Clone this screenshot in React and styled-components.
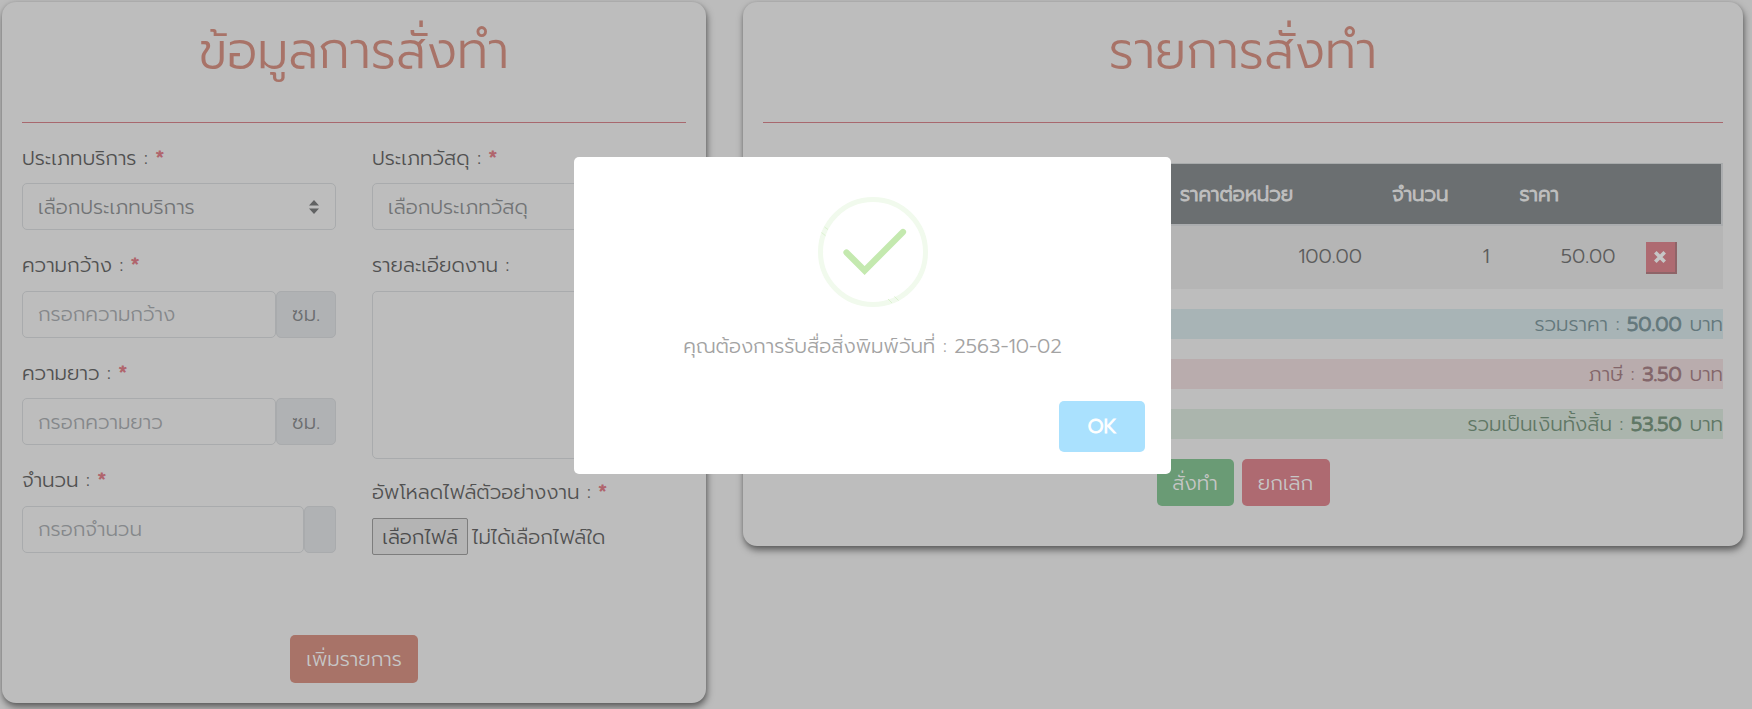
import React from "react";
import styled, { createGlobalStyle, css } from "styled-components";

const Global = createGlobalStyle`
  *, *::before, *::after { box-sizing: border-box; }
  body {
    margin: 0;
    background: #bcbcbc;
    color: #5c5c5c;
    font-family: "Prompt", "Kanit", "Open Sans", "Noto Sans Thai", sans-serif;
    font-size: 20px;
    font-weight: 300;
    line-height: 30px;
  }
  button, input, textarea { font: inherit; }
`;

const heavy = css`
  font-weight: 300;
  -webkit-text-stroke: 0.9px currentColor;
`;

const Page = styled.main`
  display: flex;
  align-items: flex-start;
  gap: 37px;
  height: 709px;
  padding: 2px 9px 0 2px;
  overflow: hidden;
`;

const Card = styled.section`
  display: flex;
  flex-direction: column;
  width: ${(p) => p.$width}px;
  height: ${(p) => p.$height}px;
  padding: 0 20px;
  border-radius: 14px;
  background: #bdbdbd;
  box-shadow: 1px 4px 7px rgba(0, 0, 0, 0.5), 0 0 3px rgba(0, 0, 0, 0.1);
`;

const Title = styled.h1`
  margin: 0;
  height: 121px;
  padding-top: 19px;
  border-bottom: 1px solid #a8686e;
  color: #a87368;
  font-size: 50px;
  font-weight: 300;
  line-height: 60px;
  text-align: center;
  white-space: nowrap;
`;

const Text = styled.span`
  white-space: nowrap;
`;

const Columns = styled.div`
  display: grid;
  grid-template-columns: 314px 314px;
  gap: 36px;
  height: 512px;
  padding-top: 19.5px;
`;

const Column = styled.div`
  display: flex;
  flex-direction: column;
`;

const Field = styled.div`
  display: flex;
  flex-direction: column;
  height: ${(p) => p.$height || 107.5}px;
`;

const Label = styled.label`
  height: 40.5px;
  color: #515151;
  white-space: nowrap;
`;

const Star = styled.span`
  color: #b0646c;
  ${heavy}
`;

const Control = styled.div`
  display: flex;
  align-items: center;
  flex: ${(p) => (p.$grow ? "1" : "none")};
  justify-content: space-between;
  height: 47px;
  padding: 0 16px 0 15px;
  border: 1px solid #a9abad;
  border-radius: 5px;
  color: ${(p) => (p.$placeholder ? "#85888b" : "#727476")};
`;

const Group = styled.div`
  display: flex;
  height: 47px;
`;

const Addon = styled.div`
  display: flex;
  align-items: center;
  padding: 0 15px;
  border: 1px solid #a9abad;
  border-radius: 5px;
  background: #b0b2b4;
  color: #6c6e70;
`;

const TextArea = styled.div`
  height: 168px;
  border: 1px solid #a9abad;
  border-radius: 5px;
`;

const FileRow = styled.div`
  display: flex;
  align-items: center;
  gap: 4px;
  margin-top: 1px;
  color: #515151;
`;

const FileButton = styled.button`
  width: 96px;
  height: 37px;
  padding: 0;
  border: 1px solid #7d7d7d;
  border-radius: 2px;
  background: #b4b4b4;
  color: #4c4c4c;
  white-space: nowrap;
`;

const Actions = styled.div`
  display: flex;
  justify-content: center;
  gap: 8px;
`;

const Button = styled.button`
  width: ${(p) => p.$width}px;
  height: ${(p) => p.$height || 47}px;
  padding: 0;
  border: 0;
  border-radius: 5px;
  background: ${(p) => p.$color};
  color: #c6c6c6;
  white-space: nowrap;
`;

const Table = styled.div`
  margin: 40px 0 20px;
  border-top: 1px solid #a8abac;
`;

const Row = styled.div`
  display: grid;
  grid-template-columns: 402px 212px 127.5px 126px 1fr;
  align-items: center;
  height: 63px;
  padding-bottom: 4px;
  background: #b5b5b5;
`;

const HeadRow = styled(Row)`
  height: 62px;
  padding-bottom: 0;
  border: solid #abadaf;
  border-width: 0 2px 2px 0;
  background: #6b6f71;
  color: #bfbfbf;
  ${heavy}
`;

const Cell = styled.div`
  padding: 0 15px;
  text-align: ${(p) => (p.$right ? "right" : "left")};
  white-space: nowrap;
`;

const Remove = styled.button`
  display: flex;
  align-items: center;
  justify-content: center;
  width: 31px;
  height: 32px;
  margin-top: 5px;
  padding: 0;
  border: solid #8e6468;
  border-width: 0 2px 2px 0;
  background: #ae6a71;
`;

const Total = styled.div`
  height: 30px;
  margin-bottom: 20px;
  background: ${(p) => p.$bg};
  color: ${(p) => p.$fg};
  text-align: right;
  white-space: nowrap;
  b { ${heavy} }
`;

const Overlay = styled.div`
  position: fixed;
  inset: 0;
`;

const Modal = styled.div`
  display: flex;
  flex-direction: column;
  align-items: center;
  width: 597px;
  height: 317px;
  margin: 157px 0 0 574px;
  padding: 39px 26px 22px;
  border-radius: 5px;
  background: #fff;
`;

const Message = styled.p`
  margin: 23px 0 0;
  color: #a3a3a3;
  font-size: 20px;
  white-space: nowrap;
`;

const OkButton = styled.button`
  align-self: flex-end;
  width: 86px;
  height: 51px;
  margin-top: auto;
  padding: 0;
  border: 0;
  border-radius: 5px;
  background: #aae1fe;
  color: #fff;
  font-size: 19px;
  && { ${heavy} }
`;

const Sorter = () => (
  <svg width="10" height="14" viewBox="0 0 10 14" fill="#616263">
    <path d="M0 5.500 5 0l5 5.500zM0 8.500h10L5 14z" />
  </svg>
);

const SuccessIcon = () => (
  <svg width="112" height="112" viewBox="0 0 112 112" fill="none">
    <circle cx="56" cy="56" r="52.5" stroke="#f1faed" strokeWidth="5" />
    <path d="M29.500 56.500 47.600 74.500 86 36" stroke="#c4e9af" strokeWidth="6.2" strokeLinecap="round" />
    <path d="M4.500 36.500l4 3.200M7.500 31l3.500 2.500M71 103l4 4M77.500 100.500l4 4" stroke="#dcf2d0" strokeWidth="1" />
  </svg>
);

function LabelText({ text, required }) {
  return (
    <Label>
      <Text>{text} :</Text>
      {required && <Star> *</Star>}
    </Label>
  );
}

function UnitField({ label, placeholder, unit }) {
  return (
    <Field>
      <LabelText text={label} required />
      <Group>
        <Control $grow $placeholder><Text>{placeholder}</Text></Control>
        <Addon>{unit}</Addon>
      </Group>
    </Field>
  );
}

export default function App() {
  return (
    <>
      <Global />
      <Page>
        <Card $width={704} $height={701}>
          <Title>ข้อมูลการสั่งทำ</Title>
          <Columns>
            <Column>
              <Field>
                <LabelText text="ประเภทบริการ" required />
                <Control><Text>เลือกประเภทบริการ</Text><Sorter /></Control>
              </Field>
              <UnitField label="ความกว้าง" placeholder="กรอกความกว้าง" unit="ซม." />
              <UnitField label="ความยาว" placeholder="กรอกความยาว" unit="ซม." />
              <UnitField label="จำนวน" placeholder="กรอกจำนวน" unit="" />
            </Column>
            <Column>
              <Field>
                <LabelText text="ประเภทวัสดุ" required />
                <Control><Text>เลือกประเภทวัสดุ</Text><Sorter /></Control>
              </Field>
              <Field $height={226.5}>
                <LabelText text="รายละเอียดงาน" />
                <TextArea />
              </Field>
              <LabelText text="อัพโหลดไฟล์ตัวอย่างงาน" required />
              <FileRow>
                <FileButton>เลือกไฟล์</FileButton>
                <Text>ไม่ได้เลือกไฟล์ใด</Text>
              </FileRow>
            </Column>
          </Columns>
          <Actions><Button $width={128} $height={48} $color="#a87368">เพิ่มรายการ</Button></Actions>
        </Card>
        <Card $width={1000} $height={544}>
          <Title>รายการสั่งทำ</Title>
          <Table>
            <HeadRow>
              <Cell />
              <Cell>ราคาต่อหน่วย</Cell>
              <Cell>จำนวน</Cell>
              <Cell>ราคา</Cell>
              <Cell />
            </HeadRow>
            <Row>
              <Cell />
              <Cell $right>100.00</Cell>
              <Cell $right>1</Cell>
              <Cell $right>50.00</Cell>
              <Cell>
                <Remove aria-label="ลบ">
                  <svg width="12" height="12" viewBox="0 0 12 12" stroke="#c6c6c6" strokeWidth="3.6">
                    <path d="M1.300 1.300l9.400 9.400M10.700 1.300l-9.400 9.400" />
                  </svg>
                </Remove>
              </Cell>
            </Row>
          </Table>
          <Total $bg="#a8b4b6" $fg="#64787c">รวมราคา : <b>50.00</b> บาท</Total>
          <Total $bg="#b9acad" $fg="#83666a">ภาษี : <b>3.50</b> บาท</Total>
          <Total $bg="#abb5ad" $fg="#607765">รวมเป็นเงินทั้งสิ้น : <b>53.50</b> บาท</Total>
          <Actions>
            <Button $width={77} $color="#6a9b75">สั่งทำ</Button>
            <Button $width={88} $color="#ae6a71">ยกเลิก</Button>
          </Actions>
        </Card>
      </Page>
      <Overlay>
        <Modal>
          <SuccessIcon />
          <Message>คุณต้องการรับสื่อสิ่งพิมพ์วันที่ : 2563-10-02</Message>
          <OkButton>OK</OkButton>
        </Modal>
      </Overlay>
    </>
  );
}
